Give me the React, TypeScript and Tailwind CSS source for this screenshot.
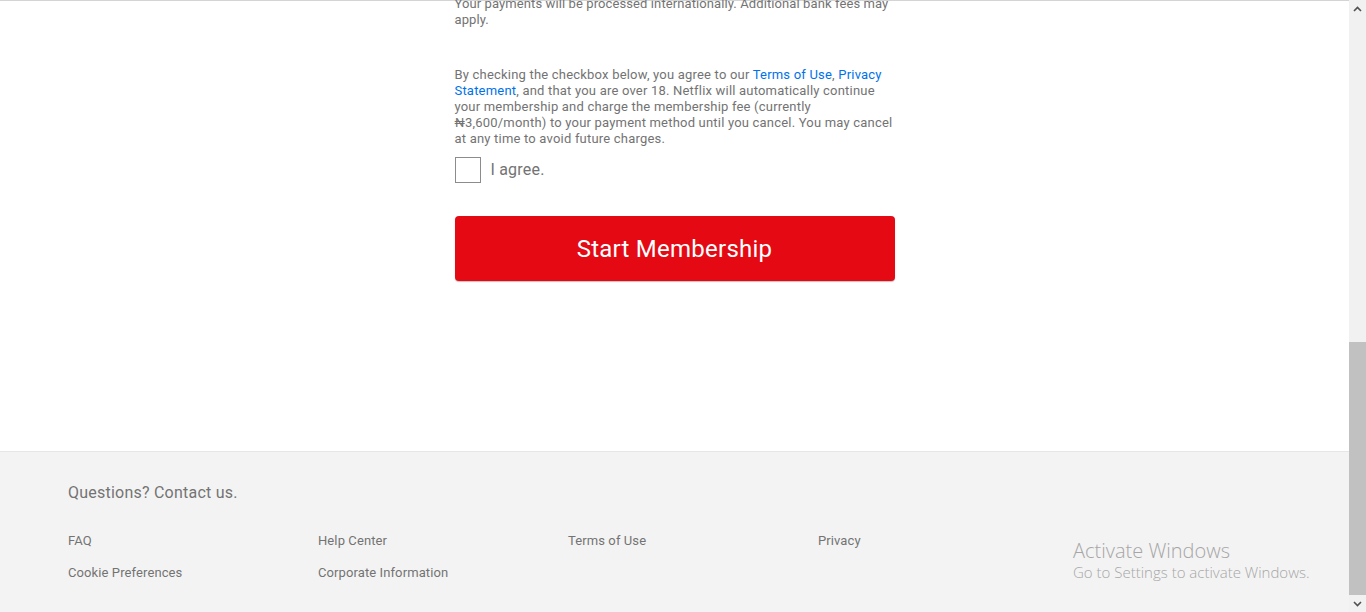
import React from 'react';

const footerLinks = [
  'FAQ',
  'Help Center',
  'Terms of Use',
  'Privacy',
  'Cookie Preferences',
  'Corporate Information',
];

function ScrollArrow({ up }: { up?: boolean }) {
  return (
    <div className="h-[17px] flex items-center justify-center">
      <svg width="9" height="6" viewBox="0 0 9 6" className="text-[#505050]">
        <path
          d={up ? 'M1 5 L4.5 1.5 L8 5' : 'M1 1 L4.5 4.5 L8 1'}
          fill="none"
          stroke="currentColor"
          strokeWidth="1.6"
        />
      </svg>
    </div>
  );
}

export default function App() {
  return (
    <div
      className="relative flex h-[612px] w-full overflow-hidden bg-white"
      style={{ fontFamily: 'Roboto, "Noto Sans", Arial, sans-serif' }}
    >
      {/* Page */}
      <div className="flex-1 flex flex-col border-t border-[#d4d4d4]">
        <div className="w-[440px] mx-auto -mt-[5px] text-[13px] leading-4 tracking-[0.2px] text-[#737373]">
          <p className="tracking-[0.1px]">
            Your payments will be processed internationally. Additional bank fees may apply.
          </p>

          <p className="mt-[39px]">
            By checking the checkbox below, you agree to our{' '}
            <a className="text-[#0071eb]">Terms of Use</a>,{' '}
            <a className="text-[#0071eb]">Privacy Statement</a>, and that you are over 18.
            Netflix will automatically continue your membership and charge the membership fee
            (currently ₦3,600/month) to your payment method until you cancel. You may cancel at
            any time to avoid future charges.
          </p>

          <label className="mt-[10px] flex items-center gap-[10px]">
            <span className="w-[26px] h-[26px] border border-[#8c8c8c] bg-white" />
            <span className="text-base text-[#737373]">I agree.</span>
          </label>

          <button className="mt-[33px] w-full h-[65px] rounded bg-[#e50914] text-white text-2xl tracking-[0.25px] shadow-[0_1px_1px_rgba(0,0,0,0.25)]">
            Start Membership
          </button>
        </div>

        {/* Footer */}
        <footer className="mt-auto h-[161px] border-t border-[#e6e6e6] bg-[#f3f3f3] pl-[68px] pt-[31px] text-[#737373]">
          <p className="text-base leading-5 tracking-[0.23px]">Questions? Contact us.</p>
          <ul className="mt-[30px] grid grid-cols-[250px_250px_250px_250px] gap-y-4 text-[13px] leading-4 tracking-[0.1px]">
            {footerLinks.map((link) => (
              <li key={link}>{link}</li>
            ))}
          </ul>
        </footer>
      </div>

      {/* Scrollbar */}
      <div className="w-[17px] flex flex-col bg-[#f1f1f1]">
        <ScrollArrow up />
        <div className="flex-1 flex flex-col">
          <div className="mt-[325px] flex-1 bg-[#c1c1c1]" />
        </div>
        <ScrollArrow />
      </div>

      {/* Windows watermark */}
      <div
        className="absolute left-[1073px] top-[539px] text-[#a6a6a6] pointer-events-none"
        style={{ fontFamily: '"Open Sans", "Noto Sans", sans-serif' }}
      >
        <div className="text-[20px] leading-6 font-light">Activate Windows</div>
        <div className="text-[15px] leading-[18px] font-light">Go to Settings to activate Windows.</div>
      </div>
    </div>
  );
}
